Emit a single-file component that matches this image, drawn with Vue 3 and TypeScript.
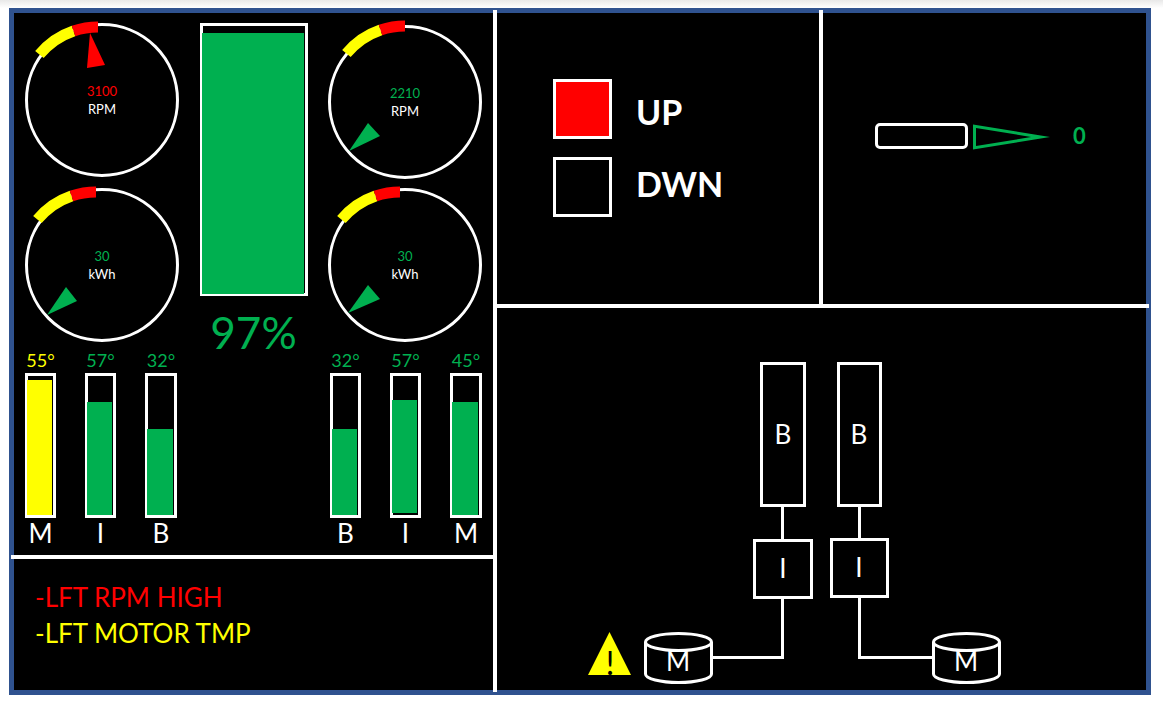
<script setup lang="ts">
type Tone = 'ok' | 'warn' | 'alarm'

interface Gauge {
  value: string
  unit: string
  tone: Tone
  needle: string
  bands: string
}

interface Bar {
  name: string
  temp: number
  level: number
  base: number
  tone: Tone
}

const leftGauges: Gauge[] = [
  { value: '3100', unit: 'RPM', tone: 'alarm', needle: '-12,-67 -15,-32 3,-35', bands: 'translate(-4 3)' },
  { value: '30', unit: 'kWh', tone: 'ok', needle: '-55,50 -36,22 -25,36', bands: 'translate(-6 3)' },
]
const rightGauges: Gauge[] = [
  { value: '2210', unit: 'RPM', tone: 'ok', needle: '-56,49 -37,21 -25,34', bands: 'translate(0 0)' },
  { value: '30', unit: 'kWh', tone: 'ok', needle: '-57,48 -37,20 -25,34', bands: 'translate(-5 3)' },
]
const gaugeColumns = [
  { side: 'left', gauges: leftGauges },
  { side: 'right', gauges: rightGauges },
]

const barGroups: { side: string; bars: Bar[] }[] = [
  {
    side: 'left',
    bars: [
      { name: 'M', temp: 55, level: 97, base: 0, tone: 'warn' },
      { name: 'I', temp: 57, level: 81, base: 0, tone: 'ok' },
      { name: 'B', temp: 32, level: 62, base: 0, tone: 'ok' },
    ],
  },
  {
    side: 'right',
    bars: [
      { name: 'B', temp: 32, level: 62, base: 0, tone: 'ok' },
      { name: 'I', temp: 57, level: 81, base: 1.5, tone: 'ok' },
      { name: 'M', temp: 45, level: 81, base: 0, tone: 'ok' },
    ],
  },
]

const charge = 97
const heading = 0
const gear = [
  { label: 'UP', lit: true },
  { label: 'DWN', lit: false },
]
const alerts: { text: string; tone: Tone }[] = [
  { text: '-LFT RPM HIGH', tone: 'alarm' },
  { text: '-LFT MOTOR TMP', tone: 'warn' },
]
</script>

<template>
  <div class="page">
    <main class="screen">
      <div class="side">
        <section class="power" aria-label="Power">
          <div class="instruments">
            <div v-for="col in gaugeColumns" :key="col.side" class="gauges" :class="col.side">
              <div v-for="g in col.gauges" :key="g.unit" class="gauge">
                <svg viewBox="-77 -77 154 154" aria-hidden="true">
                  <circle class="dial" r="75.5" />
                  <g class="bands" :transform="g.bands">
                    <path class="band-warn" d="M-58.6 -48.4 A76 76 0 0 1 -24.5 -72" />
                    <path class="band-alarm" d="M-24.5 -72 A76 76 0 0 1 0 -76" />
                  </g>
                  <polygon class="needle" :class="g.tone" :points="g.needle" />
                </svg>
                <div class="reading">
                  <span :class="g.tone">{{ g.value }}</span>
                  <span>{{ g.unit }}</span>
                </div>
              </div>
            </div>
            <div class="charge">
              <div class="tank">
                <div class="fill ok" :style="{ height: `calc(${charge}% + 2px)` }"></div>
              </div>
              <div class="percent ok">{{ charge }}%</div>
            </div>
          </div>
          <div class="temps">
            <div v-for="group in barGroups" :key="group.side" class="group">
              <div v-for="b in group.bars" :key="b.name" class="temp">
                <span class="degrees" :class="b.tone">{{ b.temp }}°</span>
                <div class="bar">
                  <div class="fill" :class="b.tone" :style="{ height: b.level + '%', bottom: b.base + '%' }"></div>
                </div>
                <span class="name">{{ b.name }}</span>
              </div>
            </div>
          </div>
        </section>
        <section class="alerts" aria-label="Alerts">
          <p v-for="a in alerts" :key="a.text" :class="a.tone">{{ a.text }}</p>
        </section>
      </div>

      <div class="main">
        <div class="status">
          <section class="gear" aria-label="Gear">
            <div class="lamps">
              <span v-for="g in gear" :key="g.label" class="lamp" :class="{ lit: g.lit }"></span>
            </div>
            <div class="labels">
              <span v-for="g in gear" :key="g.label">{{ g.label }}</span>
            </div>
          </section>
          <section class="vector" aria-label="Thrust vector">
            <span class="nozzle"></span>
            <svg class="arrow" viewBox="0 0 77 28" aria-hidden="true">
              <path fill-rule="evenodd" d="M0 2.5 L77 15 L0 27.5 Z M3 6 V24 L58 15 Z" />
            </svg>
            <span class="angle ok">{{ heading }}</span>
          </section>
        </div>

        <section class="drive" aria-label="Drivetrain">
          <svg viewBox="0 0 415 324" role="img" aria-label="Drivetrain diagram">
            <g class="wire">
              <rect x="174.5" y="2.5" width="43" height="142" />
              <rect x="251.5" y="2.5" width="42" height="142" />
              <rect x="167.5" y="179.5" width="57" height="57" />
              <rect x="244.5" y="178.5" width="56" height="57" />
              <path d="M195.5 146 V179" />
              <path d="M272.5 146 V178" />
              <path d="M195.5 237 V296.5 H126" />
              <path d="M272.5 236 V296.5 H346" />
              <ellipse cx="91.5" cy="281" rx="33" ry="8.5" />
              <path d="M58.5 281 V313 A33 8.5 0 0 0 124.5 313 V281" />
              <ellipse cx="379.5" cy="281" rx="33" ry="8.5" />
              <path d="M346.5 281 V313 A33 8.5 0 0 0 412.5 313 V281" />
            </g>
            <polygon class="caution" points="22.5,271 1,314 44,314" />
            <text class="bang" x="23" y="314">!</text>
            <text x="196" y="83">B</text>
            <text x="272" y="83">B</text>
            <text x="196" y="217">I</text>
            <text x="272" y="216">I</text>
            <text x="91" y="310">M</text>
            <text x="379" y="310">M</text>
          </svg>
        </section>
      </div>
    </main>
  </div>
</template>

<style>
body {
  margin: 0;
  background: #fff;
}
</style>

<style scoped>
.page {
  --green: #00b050;
  --blue: #2f528f;
  box-sizing: border-box;
  display: flex;
  min-height: 100vh;
  padding: 8px 12px 10px 9px;
  background: linear-gradient(#e8e8e8, #fff 8px);
  font-family: Lato, sans-serif;
  color: #fff;
}
.ok { color: var(--green); }
.warn { color: #ff0; }
.alarm { color: #f00; }

.screen {
  flex: 1;
  display: grid;
  grid-template-columns: 483fr 649fr;
  border: 5px solid var(--blue);
  background: #000;
}

/* Dividers run a little way over the frame. */
.side {
  display: grid;
  grid-template-rows: 1fr auto;
  margin: -3px 0 -2px;
  padding: 3px 0 2px;
  border-right: 4px solid #fff;
}
.power {
  margin-left: -3px;
  padding: 10px 11px 7px 14px;
  border-bottom: 4px solid #fff;
}
.instruments {
  display: flex;
  justify-content: space-between;
}
.gauges {
  display: flex;
  flex-direction: column;
  gap: 11px;
}
.gauges.right {
  order: 3;
  gap: 9px;
  padding-top: 2px;
}
.gauge {
  display: grid;
  width: 154px;
  height: 154px;
}
.gauge > * { grid-area: 1 / 1; }
.gauge svg {
  width: 100%;
  height: 100%;
  overflow: visible;
}
.dial {
  fill: none;
  stroke: #fff;
  stroke-width: 3;
}
.bands path {
  fill: none;
  stroke-width: 11;
}
.bands .band-warn { stroke: #ff0; }
.bands .band-alarm { stroke: #f00; }
.needle { fill: currentColor; }
.reading {
  place-self: center;
  display: grid;
  justify-items: center;
  font-size: 13px;
  line-height: 18px;
}
.charge {
  order: 2;
  display: flex;
  flex-direction: column;
  align-items: center;
}
.tank,
.bar {
  position: relative;
  box-sizing: border-box;
  border: 3px solid #fff;
}
.tank {
  width: 108px;
  height: 273px;
}
.fill {
  position: absolute;
  left: -1px;
  right: 1px;
  bottom: 0;
  background: currentColor;
}
.tank .fill { bottom: -1px; }
.percent {
  height: 46px;
  font-size: 44px;
  line-height: 72px;
}
.temps {
  display: flex;
  justify-content: space-between;
  padding-top: 6px;
}
.group {
  display: grid;
  grid-template-columns: 31px 31px 32px;
  gap: 29px;
}
.temp {
  display: grid;
  justify-items: center;
}
.degrees {
  font-size: 18px;
  line-height: 25px;
}
.bar {
  width: 100%;
  height: 145px;
}
.name {
  font-size: 26px;
  line-height: 30px;
}

.alerts { padding: 20px 21px 39px; }
.alerts p {
  margin: 0;
  font-size: 26px;
  line-height: 36px;
}

.main {
  display: grid;
  grid-template-rows: 295fr 382fr;
}
.status {
  display: grid;
  grid-template-columns: 326fr 326fr;
  margin: -3px -3px 0 0;
  border-bottom: 4px solid #fff;
}
.gear {
  display: flex;
  align-items: flex-start;
  gap: 24px;
  padding: 66px 0 0 56px;
  border-right: 4px solid #fff;
}
.lamps {
  display: grid;
  gap: 18px;
  padding-top: 3px;
}
.lamp {
  box-sizing: border-box;
  width: 59px;
  height: 60px;
  border: 3px solid #fff;
}
.lamp.lit { background: #f00; }
.labels {
  display: grid;
  font-size: 34px;
  font-weight: 700;
  line-height: 72px;
}
.vector {
  display: flex;
  align-items: center;
  align-self: start;
  padding: 112px 0 0 52px;
}
.nozzle {
  box-sizing: border-box;
  width: 93px;
  height: 26px;
  margin-right: 5px;
  border: 3px solid #fff;
  border-radius: 5px;
}
.arrow {
  width: 77px;
  height: 28px;
  margin-right: 23px;
  fill: var(--green);
}
.angle {
  font-size: 22px;
  font-weight: 700;
  line-height: 28px;
}

.drive { padding: 53px 0 0 90px; }
.drive svg {
  display: block;
  width: 415px;
  height: 324px;
}
.drive text {
  fill: #fff;
  font-size: 26px;
  text-anchor: middle;
}
.drive .bang {
  fill: #000;
  font-size: 32px;
}
.wire {
  fill: none;
  stroke: #fff;
  stroke-width: 3;
}
.caution { fill: #ff0; }
</style>
